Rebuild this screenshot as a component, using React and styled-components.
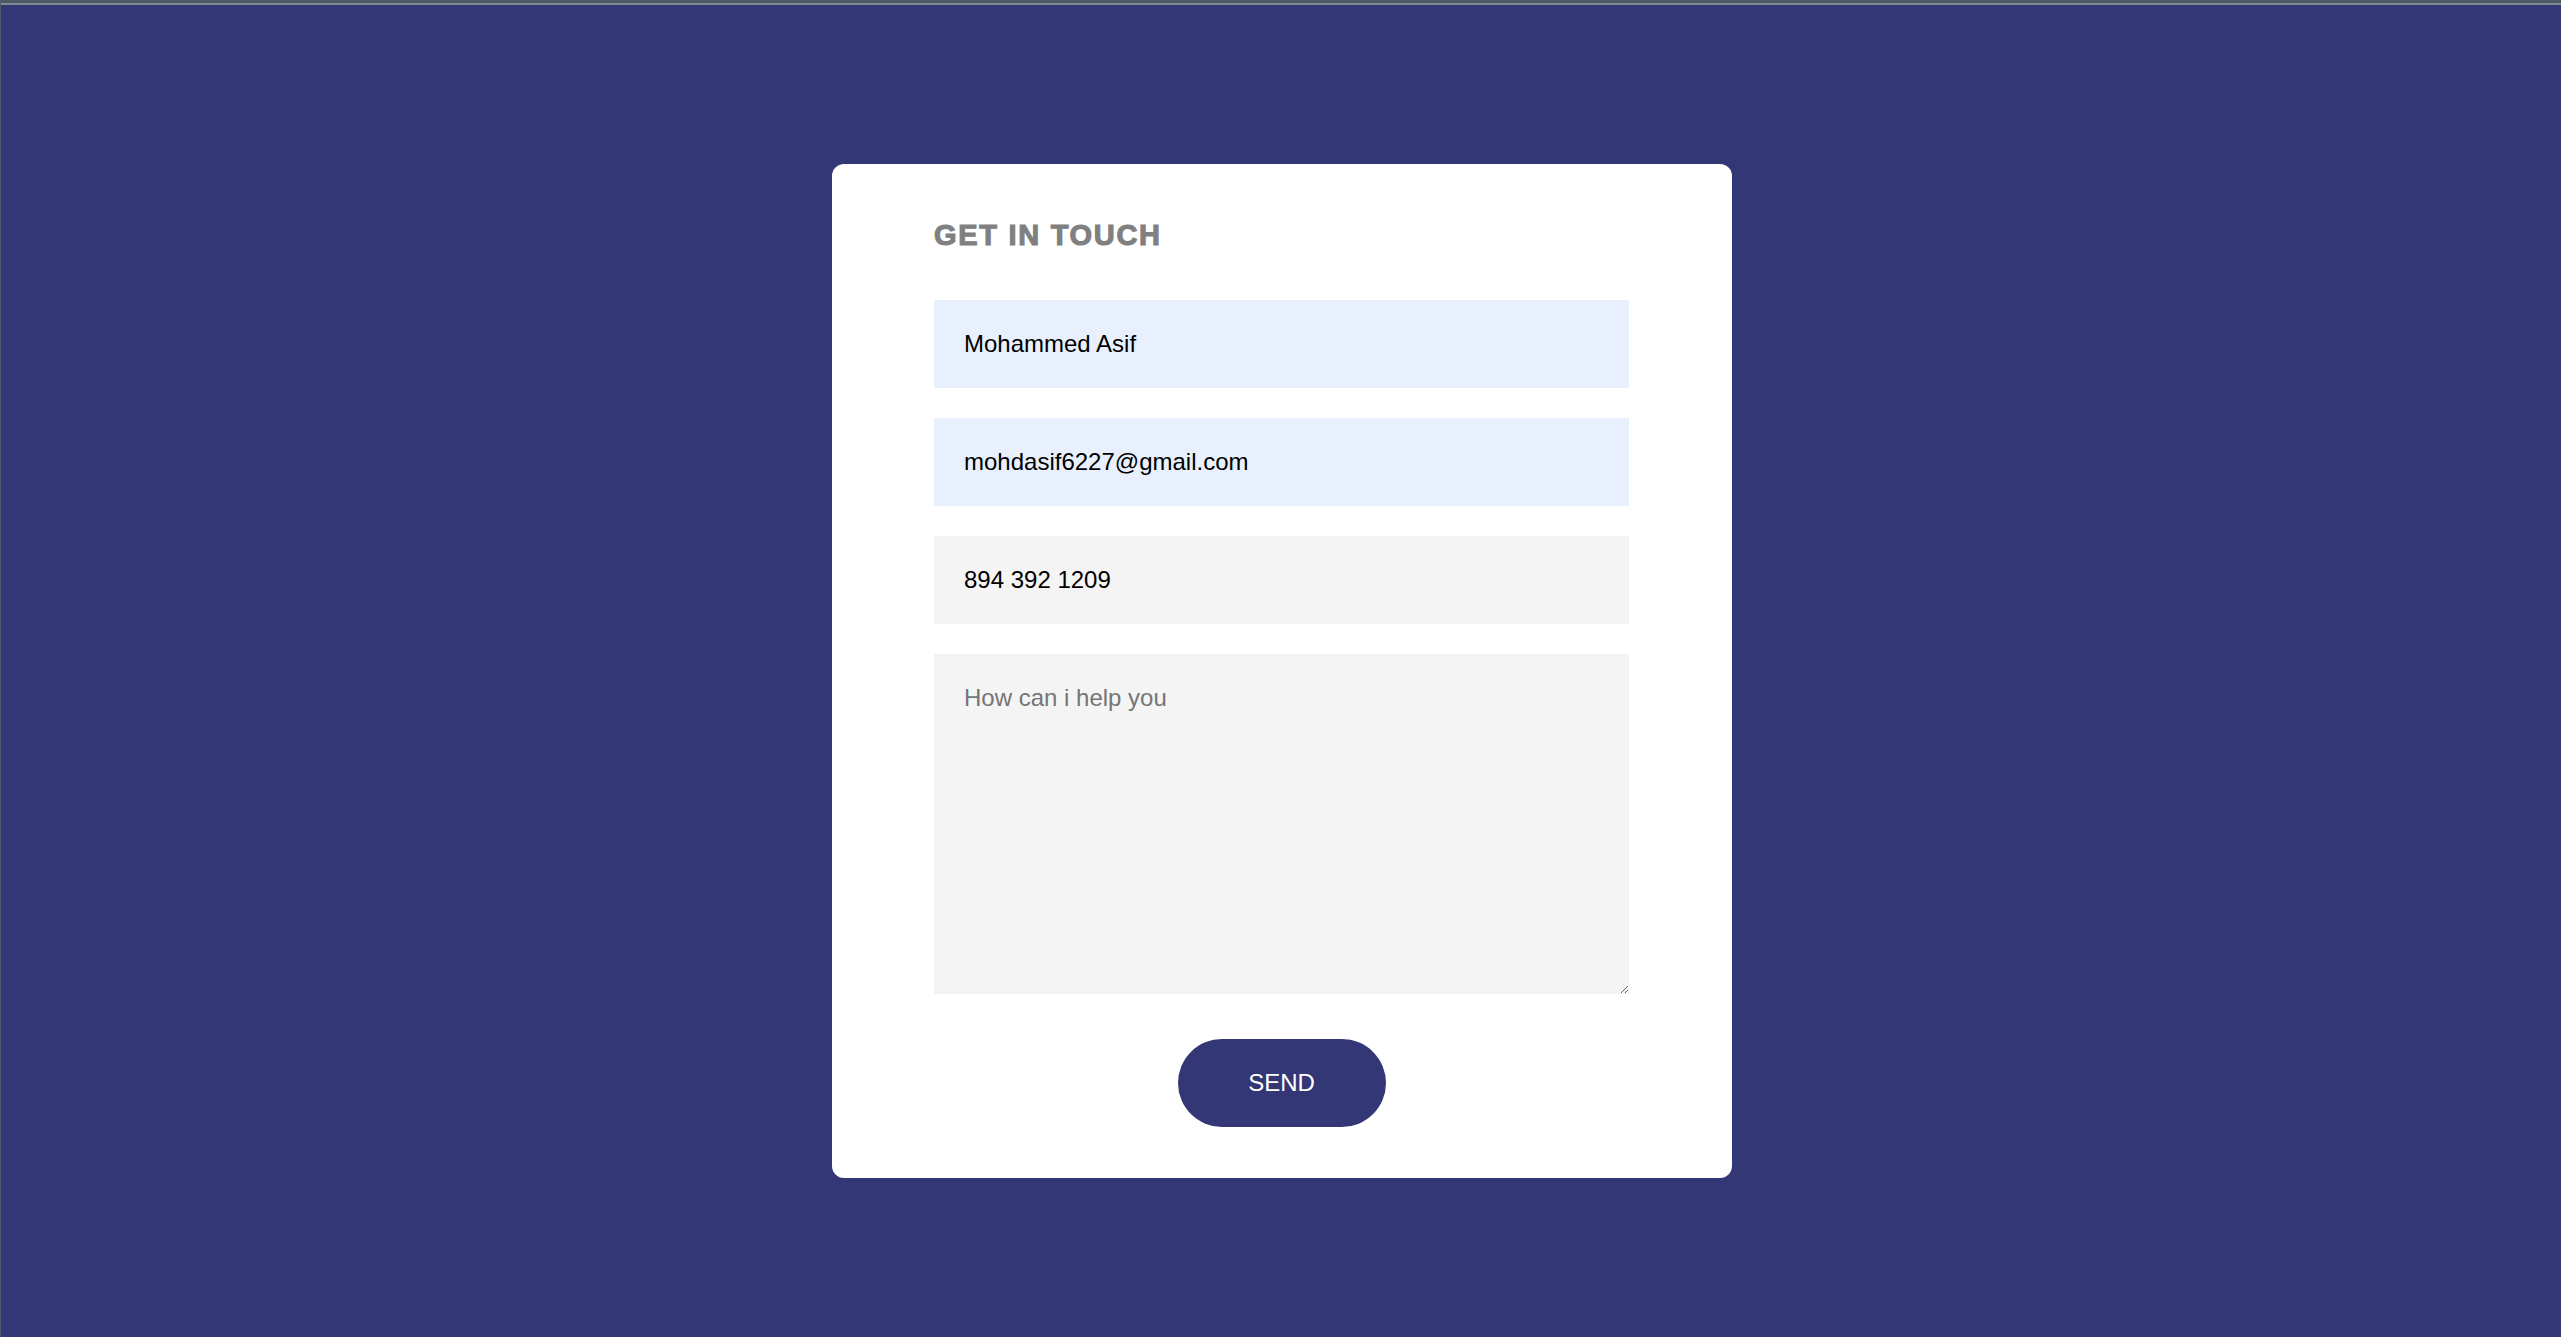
import React from "react";
import styled, { createGlobalStyle } from "styled-components";

const GlobalStyle = createGlobalStyle`
  html, body {
    margin: 0;
    padding: 0;
  }
  body {
    font-family: "Liberation Sans", Arial, sans-serif;
  }
  *, *::before, *::after {
    box-sizing: border-box;
  }
`;

const Page = styled.div`
  min-height: 100vh;
  background: #343775;
  border-top: 3px solid #4b5b66;
  border-left: 1px solid #4f5866;
  box-shadow: inset 0 2px 0 #7a8a91;
  display: flex;
  align-items: center;
  justify-content: center;
  padding-top: 1px;
`;

const Card = styled.form`
  width: 900px;
  background: #ffffff;
  border-radius: 12px;
  padding: 55px 103px 51px 102px;
  display: flex;
  flex-direction: column;
  margin-left: 2px;
`;

const Title = styled.h2`
  margin: 0 0 48px;
  font-family: "Liberation Sans", Arial, sans-serif;
  font-size: 29px;
  line-height: 33px;
  font-weight: 900;
  letter-spacing: 1.7px;
  color: #808080;
  -webkit-text-stroke: 1.1px #808080;
  text-transform: uppercase;
`;

const Fields = styled.div`
  display: flex;
  flex-direction: column;
  gap: 30px;
`;

const Input = styled.input`
  display: block;
  width: 100%;
  height: 88px;
  border: none;
  outline: none;
  padding: 0 30px;
  font-family: "Liberation Sans", Arial, sans-serif;
  font-size: 24px;
  color: #000000;
  background: ${(p) => (p.$filled ? "#e8f0fe" : "#f4f4f4")};
`;

const Message = styled.textarea`
  display: block;
  width: 100%;
  height: 340px;
  border: none;
  outline: none;
  padding: 30px;
  font-family: "Liberation Sans", Arial, sans-serif;
  font-size: 24px;
  color: #000000;
  background: #f4f4f4;
  resize: vertical;
  caret-color: #000000;
  &::placeholder {
    color: #757575;
  }
`;

const SendButton = styled.button`
  align-self: center;
  margin-top: 45px;
  width: 208px;
  height: 88px;
  border: none;
  border-radius: 44px;
  background: #343775;
  color: #ffffff;
  font-family: "Liberation Sans", Arial, sans-serif;
  font-size: 24px;
  text-transform: uppercase;
  cursor: pointer;
`;

export default function App() {
  return (
    <>
      <GlobalStyle />
      <Page>
        <Card onSubmit={(e) => e.preventDefault()}>
          <Title>Get in touch</Title>
          <Fields>
            <Input $filled type="text" defaultValue="Mohammed Asif" />
            <Input $filled type="email" defaultValue="mohdasif6227@gmail.com" />
            <Input type="tel" defaultValue="894 392 1209" />
            <Message placeholder="How can i help you" autoFocus />
          </Fields>
          <SendButton type="submit">Send</SendButton>
        </Card>
      </Page>
    </>
  );
}
